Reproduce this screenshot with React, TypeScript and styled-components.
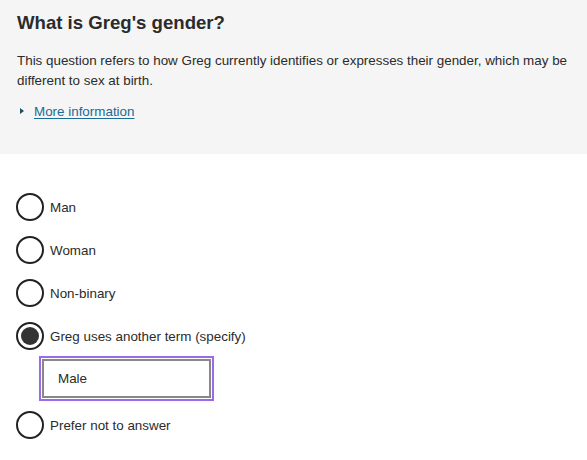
import styled, { createGlobalStyle } from 'styled-components'

const GlobalStyle = createGlobalStyle`
  html, body {
    margin: 0;
    padding: 0;
    background: #ffffff;
  }
  body {
    font-family: 'Liberation Sans', Arial, sans-serif;
    color: #222222;
  }
`

const options = [
  { label: 'Man', checked: false },
  { label: 'Woman', checked: false },
  { label: 'Non-binary', checked: false },
  { label: 'Greg uses another term (specify)', checked: true, specify: 'Male' },
  { label: 'Prefer not to answer', checked: false },
]

const App = () => {
  return (
    <Page>
      <GlobalStyle />
      <Panel>
        <Heading>What is Greg's gender?</Heading>
        <Hint>
          This question refers to how Greg currently identifies or expresses their gender, which may be
          different to sex at birth.
        </Hint>
        <Details>
          <Arrow />
          <Link href="#">More information</Link>
        </Details>
      </Panel>
      <Options>
        {options.map((o) => (
          <Item key={o.label}>
            <Row>
              <Radio checked={o.checked} />
              <Label>{o.label}</Label>
            </Row>
            {o.specify && (
              <Specify>
                <TextInput defaultValue={o.specify} />
              </Specify>
            )}
          </Item>
        ))}
      </Options>
    </Page>
  )
}

const Page = styled.div`
  width: 587px;
`

const Panel = styled.section`
  background: #f5f5f5;
  padding: 11px 17px 0;
  height: 154px;
  box-sizing: border-box;
`

const Heading = styled.h1`
  margin: 0;
  font-size: 18.6px;
  line-height: 24px;
  font-weight: 700;
  color: #2b2b2b;
`

const Hint = styled.p`
  margin: 16px 0 0;
  font-size: 13.4px;
  line-height: 20px;
  color: #2b2b2b;
`

const Details = styled.div`
  display: flex;
  align-items: center;
  margin-top: 10px;
  height: 20px;
`

const Arrow = styled.span`
  width: 0;
  height: 0;
  border-top: 3.5px solid transparent;
  border-bottom: 3.5px solid transparent;
  border-left: 4px solid #1d4f6b;
  margin: 0 10px 0 3px;
`

const Link = styled.a`
  font-size: 13.4px;
  color: #1a6b97;
  text-decoration: underline;
  text-underline-offset: 2px;
`

const Options = styled.div`
  display: flex;
  flex-direction: column;
  padding: 39px 16px 0;
  gap: 15px;
`

const Item = styled.div`
  display: flex;
  flex-direction: column;
`

const Row = styled.label`
  display: flex;
  align-items: center;
  gap: 6px;
  height: 28px;
`

const Radio = styled.span<{ checked: boolean }>`
  width: 28px;
  height: 28px;
  box-sizing: border-box;
  border: 2px solid #222222;
  border-radius: 50%;
  background: #ffffff;
  flex-shrink: 0;
  display: flex;
  align-items: center;
  justify-content: center;
  &::after {
    content: '';
    display: ${({ checked }) => (checked ? 'block' : 'none')};
    width: 18px;
    height: 18px;
    border-radius: 50%;
    background: #333333;
  }
`

const Label = styled.span`
  font-size: 13.4px;
  color: #2b2b2b;
`

const Specify = styled.div`
  padding: 9px 0 0 26px;
  margin-bottom: -2px;
`

const TextInput = styled.input`
  display: block;
  width: 169px;
  height: 39px;
  box-sizing: border-box;
  border: 2px solid #888888;
  outline: 2px solid #9b6ae6;
  outline-offset: 1px;
  padding: 0 14px;
  font-family: 'Liberation Sans', Arial, sans-serif;
  font-size: 13.4px;
  color: #2b2b2b;
  background: #ffffff;
  margin: 0;
`

export default App
